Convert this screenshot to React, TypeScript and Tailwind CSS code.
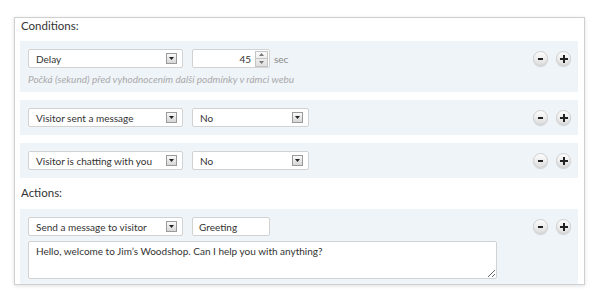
import React from "react";

const font = { fontFamily: 'Lato, "Open Sans", sans-serif' };

function Arrow() {
  return (
    <div className="w-[11px] h-[11px] border border-[#9a9a9a] bg-gradient-to-b from-[#fafafa] to-[#d6d6d6] flex items-center justify-center">
      <svg width="5" height="3" viewBox="0 0 5 3">
        <path d="M0 0 H5 L2.5 3 Z" fill="#222" />
      </svg>
    </div>
  );
}

function Select({ label, w }: { label: string; w: string }) {
  return (
    <div className={`${w} h-[19px] bg-white border border-[#d2d2d2] rounded-[2px] flex items-center pl-[7px] pr-[5px] justify-between`}>
      <span className="text-[10px] text-[#333] leading-none">{label}</span>
      <Arrow />
    </div>
  );
}

function PlusMinus() {
  const cls =
    "w-[15px] h-[15px] rounded-full border border-[#cfcfcf] bg-gradient-to-b from-[#fdfdfd] to-[#dedede] shadow-[0_1px_1px_rgba(0,0,0,0.15)] flex items-center justify-center";
  return (
    <div className="flex gap-[8px] h-[19px] items-center">
      <div className={cls}>
        <svg width="5" height="2" viewBox="0 0 5 2"><rect width="5" height="2" fill="#222" /></svg>
      </div>
      <div className={cls}>
        <svg width="8" height="8" viewBox="0 0 8 8"><path d="M3 0h2v8H3z M0 3h8v2H0z" fill="#222" /></svg>
      </div>
    </div>
  );
}

export default function App() {
  return (
    <div className="w-[600px] h-[300px] bg-white pt-[17px] pl-[14px]" style={font}>
      <div className="w-[571px] h-[268px] border border-[#cfcfcf] shadow-[0_1px_4px_rgba(0,0,0,0.12)] pl-[5px] pr-[6px] overflow-hidden">
        <div className="h-[16px] leading-[16px] text-[11.5px] text-[#333] mb-[7px] pl-[1px]">Conditions:</div>

        <div className="bg-[#eff4f9] pl-[8px] pr-[7px] pt-[8px] pb-[6px] flex justify-between">
          <div>
            <div className="flex items-center">
              <Select label="Delay" w="w-[155px]" />
              <div className="ml-[9px] w-[78px] h-[19px] bg-white border border-[#d2d2d2] rounded-[2px] flex items-center justify-end pr-[1px]">
                <span className="text-[10px] text-[#333] leading-none mr-[4px]">45</span>
                <div className="w-[13px] h-[16px] border border-[#c4c4c4] bg-gradient-to-b from-[#fafafa] to-[#e0e0e0] flex flex-col">
                  <div className="flex-1 flex items-center justify-center border-b border-[#c4c4c4]">
                    <svg width="5" height="3" viewBox="0 0 5 3"><path d="M0 3 H5 L2.5 0 Z" fill="#777" /></svg>
                  </div>
                  <div className="flex-1 flex items-center justify-center">
                    <svg width="5" height="3" viewBox="0 0 5 3"><path d="M0 0 H5 L2.5 3 Z" fill="#777" /></svg>
                  </div>
                </div>
              </div>
              <span className="ml-[4px] text-[10px] text-[#888] leading-none">sec</span>
            </div>
            <div className="mt-[5px] h-[13px] leading-[13px] text-[10px] italic text-[#a9a9a9]">
              Počká (sekund) před vyhodnocením další podmínky v rámci webu
            </div>
          </div>
          <PlusMinus />
        </div>

        <div className="mt-[8px] bg-[#eff4f9] pl-[8px] pr-[7px] py-[8px] flex justify-between">
          <div className="flex items-center gap-[9px]">
            <Select label="Visitor sent a message" w="w-[155px]" />
            <Select label="No" w="w-[117px]" />
          </div>
          <PlusMinus />
        </div>

        <div className="mt-[8px] bg-[#eff4f9] pl-[8px] pr-[7px] py-[8px] flex justify-between">
          <div className="flex items-center gap-[9px]">
            <Select label="Visitor is chatting with you" w="w-[155px]" />
            <Select label="No" w="w-[117px]" />
          </div>
          <PlusMinus />
        </div>

        <div className="mt-[7px] h-[16px] leading-[16px] text-[11.5px] text-[#333] mb-[8px] pl-[1px]">Actions:</div>

        <div className="bg-[#eff4f9] pl-[8px] pr-[7px] pt-[8px] pb-[5px] flex justify-between">
          <div>
            <div className="flex items-center gap-[9px]">
              <Select label="Send a message to visitor" w="w-[155px]" />
              <div className="w-[78px] h-[19px] bg-white border border-[#d2d2d2] rounded-[2px] flex items-center pl-[6px]">
                <span className="text-[10px] text-[#333] leading-none">Greeting</span>
              </div>
            </div>
            <textarea
              readOnly
              defaultValue="Hello, welcome to Jim’s Woodshop. Can I help you with anything?"
              className="mt-[5px] block w-[469px] h-[38px] bg-white border border-[#d2d2d2] rounded-[2px] px-[7px] py-[3px] text-[10px] leading-[13px] text-[#333] outline-none"
              style={font}
            />
          </div>
          <PlusMinus />
        </div>
      </div>
    </div>
  );
}
